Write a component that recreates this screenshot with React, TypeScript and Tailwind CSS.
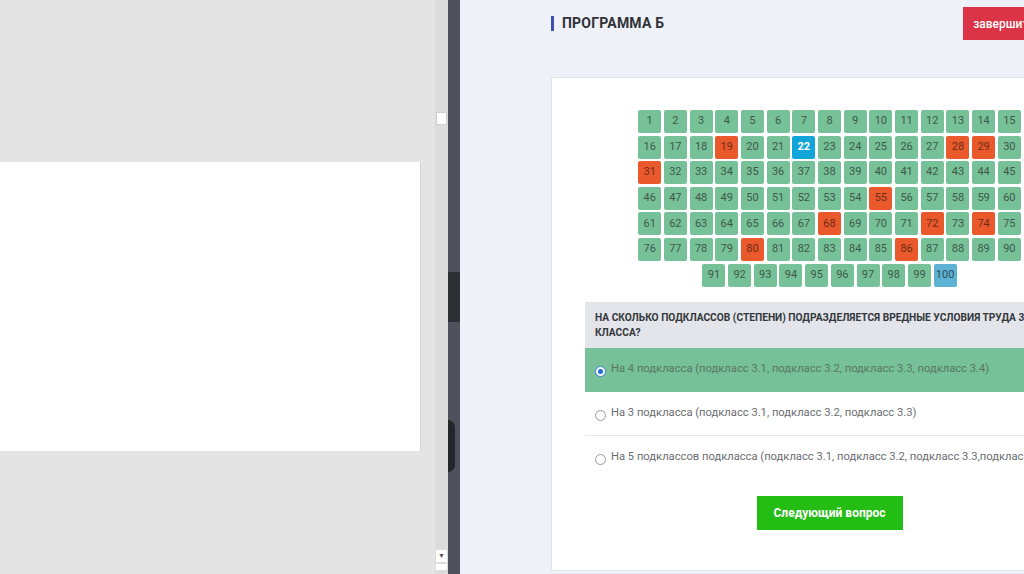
import React from "react";

const wrong = [19, 28, 29, 31, 55, 68, 72, 74, 80, 86];

const answers = [
  "На 4 подкласса (подкласс 3.1, подкласс 3.2, подкласс 3.3, подкласс 3.4)",
  "На 3 подкласса (подкласс 3.1, подкласс 3.2, подкласс 3.3)",
  "На 5 подклассов подкласса (подкласс 3.1, подкласс 3.2, подкласс 3.3,подкласс 3.4, подкласс 3.5)",
];

const Cell = ({ n }: { n: number }) => {
  let cls = "bg-[#76c197] text-[#40584a]";
  if (wrong.includes(n)) cls = "bg-[#e9592c] text-[#6e2c17]";
  if (n === 22) cls = "bg-[#12a5da] text-white font-bold";
  if (n === 100) cls = "bg-[#5db1d2] text-[#2f4e5c]";
  return (
    <div
      className={`w-[23px] h-[23px] rounded-[2px] flex items-center justify-center text-[11px] ${cls}`}
    >
      {n}
    </div>
  );
};

export default function App() {
  const nums = Array.from({ length: 100 }, (_, i) => i + 1);

  return (
    <div
      className="w-[1024px] h-[574px] flex overflow-hidden"
      style={{ fontFamily: "Roboto, 'Liberation Sans', sans-serif" }}
    >
      {/* left: slide editor leftovers */}
      <div className="w-[435px] shrink-0 bg-[#e4e4e4] pt-[162px]">
        <div className="w-[421px] h-[289px] bg-white border-r border-[#d4d4d4]" />
      </div>
      <div className="w-[13px] shrink-0 bg-[#dcdcdc] flex flex-col items-center pt-[112px] pb-[4px]">
        <div className="w-[11px] h-[13px] bg-white border border-[#cfcfcf]" />
        <div className="mt-auto w-[11px] h-[12px] bg-white flex items-center justify-center text-[7px] text-[#555] leading-none">
          ▼
        </div>
        <div className="mt-[2px] w-[11px] h-[6px] bg-white" />
      </div>
      <div className="w-[12px] shrink-0 bg-[#4e525d] flex flex-col pt-[272px]">
        <div className="h-[50px] bg-[#2c3034]" />
        <div className="mt-[98px] h-[52px] w-[7px] bg-[#23262b] rounded-r-full" />
      </div>

      {/* right: test page */}
      <div className="flex-1 bg-[#eef1f8] overflow-hidden pl-[91px]">
        <div className="w-[620px]">
          <div className="flex items-start h-[77px] pt-[7px]">
            <div className="flex items-center mt-[8px]">
              <div className="w-[3px] h-[15px] bg-[#3f51b5]" />
              <span className="ml-[8px] text-[14px] font-bold text-[#2f3337] tracking-[0.2px] leading-[16px]">
                ПРОГРАММА Б
              </span>
            </div>
            <div className="ml-[299px] h-[33px] px-[10px] bg-[#da3446] text-white text-[12px] font-medium flex items-center w-[100px]">
              завершить
            </div>
          </div>

          <div className="w-[557px] bg-white border border-[#e2e5ea] pt-[32px] pb-[40px] px-[33px] flex flex-col items-center">
            <div className="w-[384px] flex flex-wrap justify-center gap-x-[2.7px] gap-y-[2.6px]">
              {nums.map((n) => (
                <Cell key={n} n={n} />
              ))}
            </div>

            <div className="w-full mt-[15px]">
              <div className="bg-[#e3e5ea] pl-[10px] pr-[36px] pt-[8px] pb-[8px] text-[10.2px] font-bold text-[#33373b] leading-[15px]">
                НА СКОЛЬКО ПОДКЛАССОВ (СТЕПЕНИ) ПОДРАЗДЕЛЯЕТСЯ ВРЕДНЫЕ УСЛОВИЯ ТРУДА 3 КЛАССА?
              </div>
              {answers.map((a, i) => (
                <div
                  key={i}
                  className={`h-[44px] flex items-start pt-[13px] pl-[10px] whitespace-nowrap overflow-hidden ${
                    i === 0 ? "bg-[#76c197] text-[#5a7566]" : "text-[#6a6d70]"
                  } ${i === 1 ? "border-b border-[#e4e6ea]" : ""}`}
                >
                  <span
                    className={`mt-[5px] w-[11px] h-[11px] rounded-full border flex items-center justify-center shrink-0 ${
                      i === 0 ? "border-[#3b82d6] bg-white" : "border-[#9a9a9a] bg-white"
                    }`}
                  >
                    {i === 0 && <span className="w-[5px] h-[5px] rounded-full bg-[#1f6fd1]" />}
                  </span>
                  <span className="ml-[5px] text-[11.2px]">{a}</span>
                </div>
              ))}
            </div>

            <div className="mt-[16px] w-[146px] h-[34px] bg-[#23bd14] text-white text-[12px] font-bold flex items-center justify-center">
              Следующий вопрос
            </div>
          </div>
        </div>
      </div>
    </div>
  );
}
